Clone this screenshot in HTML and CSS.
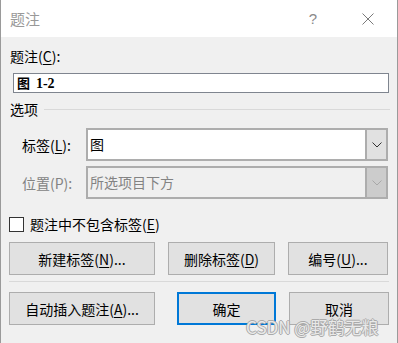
FILE: index.html
```html
<!DOCTYPE html>
<html lang="zh-CN">
<head>
    <meta charset="UTF-8">
    <meta name="viewport" content="width=device-width, initial-scale=1.0">
    <title>题注</title>
    <link rel="stylesheet" href="styles.css">
</head>
<body>
    <div class="dialog">
        <div class="titlebar">
            <span class="title">题注</span>
            <span class="help">?</span>
            <svg class="close" width="12" height="12" viewBox="0 0 12 12">
                <path d="M0.5 0.5 L11.5 11.5 M11.5 0.5 L0.5 11.5" stroke="#7a7a7a" stroke-width="1" fill="none"/>
            </svg>
        </div>

        <div class="content">
            <div class="caption-label">题注(<u>C</u>):</div>
            <div class="caption-input"><b class="fig">图</b> <b class="num">1-2</b></div>

            <div class="group-title">
                <span>选项</span>
                <div class="rule"></div>
            </div>

            <div class="field">
                <span class="field-label">标签(<u>L</u>):</span>
                <div class="combo">
                    <span class="combo-text">图</span>
                    <span class="combo-btn">
                        <svg width="10" height="6" viewBox="0 0 10 6"><path d="M0.5 0.5 L5 5 L9.5 0.5" stroke="#333" fill="none"/></svg>
                    </span>
                </div>
            </div>

            <div class="field disabled">
                <span class="field-label">位置(P):</span>
                <div class="combo">
                    <span class="combo-text">所选项目下方</span>
                    <span class="combo-btn">
                        <svg width="10" height="6" viewBox="0 0 10 6"><path d="M0.5 0.5 L5 5 L9.5 0.5" stroke="#a8a8a8" fill="none"/></svg>
                    </span>
                </div>
            </div>

            <label class="check">
                <span class="box"></span>
                <span>题注中不包含标签(<u>E</u>)</span>
            </label>

            <div class="btn-row">
                <button class="btn wide">新建标签(<u>N</u>)...</button>
                <button class="btn mid">删除标签(<u>D</u>)</button>
                <button class="btn small">编号(<u>U</u>)...</button>
            </div>

            <div class="sep"></div>

            <div class="btn-row">
                <button class="btn wide">自动插入题注(<u>A</u>)...</button>
                <button class="btn ok">确定</button>
                <button class="btn small">取消</button>
            </div>
        </div>

        <div class="watermark">CSDN @野鹤无粮</div>
    </div>
</body>
</html>
```

FILE: styles.css
```css
* {
    box-sizing: border-box;
}

body {
    margin: 0;
    padding: 0;
    font-family: 'Noto Sans CJK SC', 'Noto Sans', sans-serif;
    font-size: 14px;
    color: #000;
}

.dialog {
    position: relative;
    width: 398px;
    height: 343px;
    background-color: #f0f0f0;
    border-left: 1px solid #9a9a9a;
    border-right: 1px solid #9a9a9a;
    overflow: hidden;
}

.titlebar {
    height: 37px;
    background-color: #fff;
    display: flex;
    align-items: center;
    padding-left: 9px;
}

.title {
    font-size: 15px;
    color: #999;
    flex: 1;
    margin-top: -1px;
}

.help {
    font-family: 'Liberation Sans', sans-serif;
    font-size: 15px;
    color: #8a8a8a;
    margin-right: 45px;
}

.close {
    margin-right: 23px;
}

.content {
    padding: 9px 8px 0 8px;
}

u {
    text-decoration: underline;
    text-underline-offset: 2px;
}

.caption-label {
    line-height: 20px;
    padding-left: 1px;
    height: 20px;
}

.caption-input {
    margin: 7px 0 0 4px;
    width: 376px;
    height: 20px;
    background-color: #fff;
    border: 1px solid #7f858f;
    padding-left: 3px;
    line-height: 18px;
    font-size: 13px;
}

.caption-input .fig {
    font-weight: 700;
}

.caption-input .num {
    font-family: 'Liberation Serif', serif;
    font-weight: 700;
    font-size: 14px;
    margin-left: 3px;
}

.group-title {
    display: flex;
    align-items: center;
    margin-top: 6px;
    height: 20px;
    padding-left: 1px;
}

.group-title .rule {
    flex: 1;
    height: 1px;
    background-color: #d9d9d9;
    margin-left: 6px;
    margin-right: -1px;
}

.field {
    display: flex;
    align-items: center;
    margin-top: 9px;
}

.field + .field {
    margin-top: 5px;
}

.field-label {
    width: 77px;
    padding-left: 13px;
}

.combo {
    flex: 1;
    height: 33px;
    display: flex;
    border: 2px solid #adadad;
    background-color: #fff;
    margin-right: 1px;
}

.combo-text {
    flex: 1;
    line-height: 29px;
    padding-left: 2px;
}

.combo-btn {
    width: 21px;
    background-color: #e1e1e1;
    border-left: 2px solid #adadad;
    display: flex;
    align-items: center;
    justify-content: center;
}

.disabled .field-label,
.disabled .combo-text {
    color: #838383;
}

.disabled .combo {
    background-color: #f0f0f0;
}

.disabled .combo-btn {
    background-color: #cccccc;
}

.check {
    display: flex;
    align-items: center;
    margin-top: 17px;
    height: 16px;
}

.box {
    width: 15px;
    height: 15px;
    border: 1px solid #333;
    background-color: #fff;
    margin-right: 6px;
}

.btn-row {
    display: flex;
    margin-top: 10px;
}

.btn {
    height: 33px;
    background-color: #e1e1e1;
    border: 1px solid #adadad;
    font-family: inherit;
    font-size: 14px;
    color: #000;
    padding: 0;
}

.btn.wide {
    width: 146px;
}

.btn.mid {
    width: 107px;
    margin-left: 13px;
}

.btn.small {
    width: 100px;
    margin-left: 13px;
}

.btn.ok {
    width: 99px;
    margin-left: 22px;
    border: 2px solid #0078d7;
}

.btn-row .ok + .small {
    margin-left: 13px;
}

.sep {
    height: 1px;
    background-color: #d9d9d9;
    margin-top: 6px;
    margin-bottom: 5px;
}

.watermark {
    position: absolute;
    left: 245px;
    top: 314px;
    font-size: 17px;
    color: rgba(255, 255, 255, 0.75);
    text-shadow: 1px 0 0 #aaa, -1px 0 0 #aaa, 0 1px 0 #aaa, 0 -1px 0 #aaa;
    pointer-events: none;
}
```
